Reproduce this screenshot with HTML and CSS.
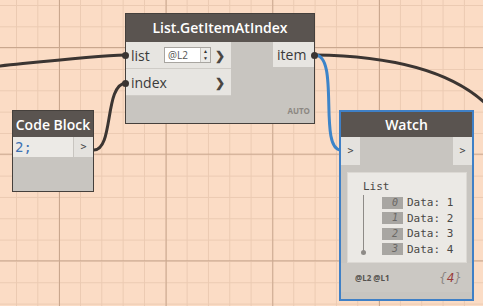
FILE: index.html
```html
<!DOCTYPE html>
<html lang="en">
<head>
    <meta charset="UTF-8">
    <title>Dynamo</title>
    <link rel="stylesheet" href="styles.css">
</head>
<body>
<div class="canvas">
    <!-- wires -->
    <svg class="wires" width="483" height="306" viewBox="0 0 483 306">
        <path d="M-10,67 C40,62 90,56 126,55" class="wire"/>
        <path d="M94,150 C114,150 104,84 126,83" class="wire"/>
        <path d="M315,55 C390,56 450,70 486,104" class="wire"/>
        <path d="M315,55 C340,55 318,150 341,150" class="wire blue"/>
    </svg>

    <!-- List.GetItemAtIndex -->
    <div class="node node-get">
        <div class="node-title">List.GetItemAtIndex</div>
        <div class="node-body">
            <div class="inputs">
                <div class="port-row">
                    <span class="port-name">list</span>
                    <span class="lacing">@L2<span class="spin"><i>&#9650;</i><i>&#9660;</i></span></span>
                    <span class="chev">&#10095;</span>
                </div>
                <div class="port-row">
                    <span class="port-name">index</span>
                    <span class="chev">&#10095;</span>
                </div>
            </div>
            <div class="outputs">
                <div class="out-row">item</div>
                <div class="auto">AUTO</div>
            </div>
        </div>
        <span class="dot dot-l1"></span>
        <span class="dot dot-l2"></span>
        <span class="dot dot-r1"></span>
    </div>

    <!-- Code Block -->
    <div class="node node-code">
        <div class="node-title">Code Block</div>
        <div class="code-row">
            <span class="code">2;</span>
            <span class="code-out">&gt;</span>
        </div>
    </div>

    <!-- Watch -->
    <div class="node node-watch">
        <div class="node-title">Watch</div>
        <div class="watch-row">
            <span class="watch-port">&gt;</span>
            <span class="watch-port">&gt;</span>
        </div>
        <div class="watch-panel">
            <div class="list-head">List</div>
            <div class="list-tree">
                <div class="item"><span class="idx">0</span>Data: 1</div>
                <div class="item"><span class="idx">1</span>Data: 2</div>
                <div class="item"><span class="idx">2</span>Data: 3</div>
                <div class="item"><span class="idx">3</span>Data: 4</div>
            </div>
        </div>
        <div class="watch-foot">
            <span class="levels">@L2 @L1</span>
            <span class="count">{<b>4</b>}</span>
        </div>
    </div>
</div>
</body>
</html>
```

FILE: styles.css
```css
* {
    margin: 0;
    padding: 0;
    box-sizing: border-box;
}

body {
    width: 483px;
    height: 306px;
    overflow: hidden;
    font-family: "Open Sans", "Liberation Sans", sans-serif;
}

.canvas {
    position: relative;
    width: 483px;
    height: 306px;
    background-color: #fbdcc5;
    background-image:
        linear-gradient(to right, #c9a78e 1px, transparent 1px),
        linear-gradient(to bottom, #c9a78e 1px, transparent 1px),
        linear-gradient(to right, #ebcab2 1px, transparent 1px),
        linear-gradient(to bottom, #ebcab2 1px, transparent 1px);
    background-size: 106.67px 106.67px, 106.67px 106.67px, 21.33px 21.33px, 21.33px 21.33px;
    background-position: 59px 0, 0 47px, 16px 0, 0 5px;
}

.wires {
    position: absolute;
    left: 0;
    top: 0;
}

.wire {
    fill: none;
    stroke: #3b3532;
    stroke-width: 3;
}

.wire.blue {
    stroke: #3c84c9;
}

/* nodes */
.node {
    position: absolute;
    background-color: #c8c5c0;
    border: 1px solid #45403c;
}

.node-title {
    height: 28px;
    background-color: #5a5450;
    color: #fff;
    font-weight: 600;
    font-size: 14px;
    line-height: 28px;
    text-align: center;
}

.node-get {
    left: 125px;
    top: 13px;
    width: 190px;
    height: 111px;
}

.node-body {
    display: flex;
    justify-content: space-between;
    height: 81px;
}

.inputs {
    width: 105px;
}

.port-row {
    display: flex;
    align-items: center;
    height: 27px;
    padding: 0 6px 0 5px;
    background-color: #e7e5e1;
    border-bottom: 1px solid #cfccc7;
    font-size: 14px;
    color: #3a3a3a;
}

.port-name {
    flex: 1;
}

.chev {
    font-size: 12px;
    font-weight: bold;
    color: #4a4642;
}

.lacing {
    display: flex;
    align-items: center;
    justify-content: space-between;
    width: 47px;
    height: 16px;
    margin-right: 4px;
    padding-left: 3px;
    background-color: #fff;
    border: 1px solid #a8a5a0;
    font-size: 10px;
    color: #555;
}

.spin {
    display: flex;
    flex-direction: column;
    width: 10px;
    height: 14px;
    border-left: 1px solid #c8c5c0;
    background-color: #ecebe8;
}

.spin i {
    font-style: normal;
    font-size: 5px;
    line-height: 7px;
    text-align: center;
    color: #333;
}

.outputs {
    display: flex;
    flex-direction: column;
    justify-content: space-between;
    align-items: flex-end;
}

.out-row {
    width: 41px;
    height: 25px;
    padding-left: 4px;
    background-color: #e7e5e1;
    font-size: 14px;
    line-height: 25px;
    color: #3a3a3a;
}

.auto {
    padding: 0 4px 7px 0;
    font-size: 8px;
    font-weight: bold;
    color: #8c8782;
}

.dot {
    position: absolute;
    width: 7px;
    height: 7px;
    border-radius: 50%;
    background-color: #3b3532;
}

.dot-l1 { left: -4px; top: 38px; }
.dot-l2 { left: -4px; top: 66px; }
.dot-r1 { right: -4px; top: 38px; }

/* code block */
.node-code {
    left: 12px;
    top: 110px;
    width: 82px;
    height: 82px;
}

.node-code .node-title {
    height: 26px;
    line-height: 27px;
}

.code-row {
    display: flex;
    height: 20px;
    gap: 1px;
}

.code {
    flex: 1;
    padding-left: 2px;
    background-color: #eceae6;
    font-family: "DejaVu Sans Mono", monospace;
    font-size: 14px;
    line-height: 20px;
    color: #3f73b3;
}

.code-out {
    width: 19px;
    background-color: #e4e2de;
    font-family: "DejaVu Sans Mono", monospace;
    font-size: 10px;
    line-height: 20px;
    text-align: center;
    color: #444;
}

/* watch */
.node-watch {
    left: 339px;
    top: 110px;
    width: 135px;
    height: 191px;
    border: 2px solid #3f80c6;
    padding-bottom: 6px;
    display: flex;
    flex-direction: column;
}

.node-watch .node-title {
    height: 25px;
    line-height: 26px;
}

.watch-row {
    display: flex;
    justify-content: space-between;
    height: 28px;
}

.watch-port {
    width: 19px;
    background-color: #e4e2de;
    font-family: "DejaVu Sans Mono", monospace;
    font-size: 10px;
    line-height: 28px;
    text-align: center;
    color: #444;
}

.watch-panel {
    margin: 7px 5px 0 6px;
    height: 91px;
    padding: 7px 0 0 15px;
    background-color: #ebe9e5;
    border: 1px solid #dcd9d4;
    font-family: "DejaVu Sans Mono", monospace;
    font-size: 11px;
    color: #4a4845;
}

.list-head {
    line-height: 13px;
}

.list-tree {
    position: relative;
    margin-top: 2px;
    padding-left: 18px;
    border-left: 1px solid #8e8b87;
    height: 58px;
}

.list-tree::after {
    content: "";
    position: absolute;
    left: -3px;
    bottom: -2px;
    width: 5px;
    height: 5px;
    border-radius: 50%;
    background-color: #8e8b87;
}

.item {
    display: flex;
    align-items: center;
    height: 15.5px;
    gap: 4px;
}

.idx {
    width: 21px;
    height: 12px;
    padding-right: 5px;
    background-color: #a8a6a2;
    font-style: italic;
    font-size: 10px;
    line-height: 12px;
    text-align: right;
    color: #6a6865;
}

.watch-foot {
    display: flex;
    justify-content: space-between;
    align-items: center;
    height: 29px;
    margin: 0 0 0 0;
    padding: 0 10px 0 14px;
    background-color: #cbc8c3;
}

.levels {
    font-size: 8px;
    font-weight: bold;
    color: #55524e;
}

.count {
    font-family: "DejaVu Sans", sans-serif;
    font-style: italic;
    font-size: 12px;
    color: #8b8783;
}

.count b {
    font-weight: normal;
    color: #9a3b3b;
}
```
